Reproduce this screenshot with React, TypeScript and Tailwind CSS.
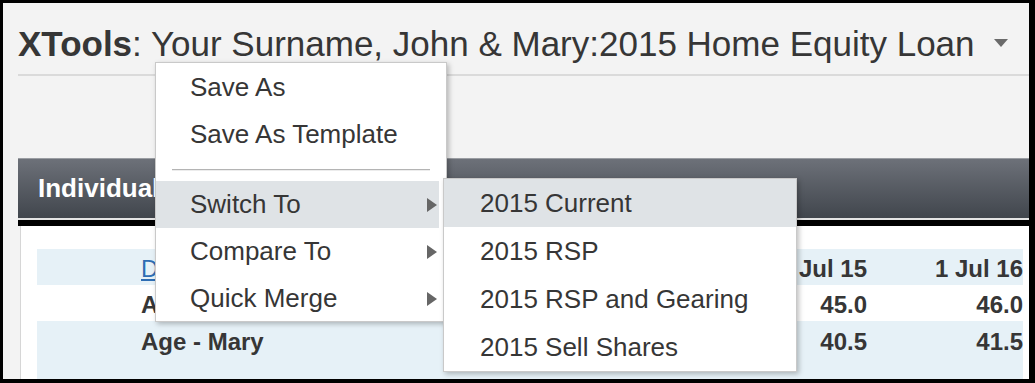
import React from 'react';

const font = { fontFamily: '"Liberation Sans", Arial, sans-serif' };

const RightArrow = () => (
    <svg width="10" height="14" viewBox="0 0 10 14" className="shrink-0">
        <path d="M0 0 L10 7 L0 14 Z" fill="#666" />
    </svg>
);

const menuItems = [
    { label: 'Switch To', active: true },
    { label: 'Compare To', active: false },
    { label: 'Quick Merge', active: false },
];

const subItems = ['2015 Current', '2015 RSP', '2015 RSP and Gearing', '2015 Sell Shares'];

const rows = [
    { label: 'Date', link: true, a: '1 Jul 15', b: '1 Jul 16', blue: true },
    { label: 'Age - John', link: false, a: '45.0', b: '46.0', blue: false },
    { label: 'Age - Mary', link: false, a: '40.5', b: '41.5', blue: true },
];

const App: React.FC = () => {
    return (
        <div style={font} className="w-[1035px] h-[383px] overflow-hidden bg-white">
            <div className="relative w-[1035px] h-[383px] flex flex-col bg-[#f3f3f3] border-l-[3px] border-t-[3px] border-r-[6px] border-b-[4px] border-black overflow-hidden text-[#363636]">
                {/* title */}
                <div className="flex items-center h-[71px] pl-[15px] pr-[21px] pt-[9px]">
                    <div className="text-[35px] leading-none whitespace-nowrap">
                        <span className="font-bold">XTools</span>: Your Surname, John &amp; Mary:2015 Home Equity Loan
                    </div>
                    <svg width="14" height="8" viewBox="0 0 14 8" className="ml-auto">
                        <path d="M0 0 L14 0 L7 8 Z" fill="#6a6a6a" />
                    </svg>
                </div>
                <div className="ml-[15px] h-[2px] bg-[#dadada]" />

                {/* panel */}
                <div className="ml-[15px] mt-[82px] flex flex-col flex-1">
                    <div className="h-[60px] flex items-center pl-[20px] border-t border-[#9a9da2] bg-gradient-to-b from-[#6d7179] to-[#41464d]">
                        <span className="text-white font-bold text-[26px] whitespace-nowrap">Individual Details</span>
                    </div>
                    <div className="h-[2px] bg-[#e4e4e4]" />
                    <div className="h-[6px] bg-black" />
                    <div className="flex-1 ml-[2px] bg-white border-l border-[#d6d6d6] pt-[23px] pl-[16px] pr-[6px] flex flex-col">
                        {rows.map((r, i) => (
                            <div
                                key={r.label}
                                className={`flex h-[36px] text-[24px] font-bold whitespace-nowrap ${r.blue ? 'bg-[#e6f1f7]' : 'bg-white'} ${i === 2 ? 'flex-1 items-start pt-[3px]' : 'items-center pt-[3px]'}`}
                            >
                                <div className="flex-1 pl-[104px]">
                                    {r.link ? <span className="text-[#2e6db3] underline font-normal">{r.label}</span> : r.label}
                                </div>
                                <div className="w-[150px] text-right">{r.a}</div>
                                <div className="w-[156px] text-right">{r.b}</div>
                            </div>
                        ))}
                    </div>
                </div>

                {/* dropdown menu */}
                <div className="absolute left-[152px] top-[59px] w-[292px] h-[260px] bg-white border border-[#c9c9c9] shadow-[2px_2px_5px_rgba(0,0,0,0.25)] pt-[1px] text-[26px] text-[#363636]">
                    <div className="h-[47px] flex items-center pl-[34px]">Save As</div>
                    <div className="h-[47px] flex items-center pl-[34px]">Save As Template</div>
                    <div className="h-[23px] flex items-center px-[16px]">
                        <div className="flex-1 h-[2px] border-t border-[#b4b4b4] bg-[#ececec]" />
                    </div>
                    {menuItems.map(m => (
                        <div
                            key={m.label}
                            className={`w-[283px] h-[47px] flex items-center pl-[34px] pr-[2px] ${m.active ? 'bg-[#dfe3e6]' : ''}`}
                        >
                            <span className="flex-1">{m.label}</span>
                            <RightArrow />
                        </div>
                    ))}
                </div>

                {/* submenu */}
                <div className="absolute left-[440px] top-[175px] w-[354px] bg-white border border-[#c9c9c9] shadow-[2px_2px_5px_rgba(0,0,0,0.25)] text-[26px] text-[#363636]">
                    {subItems.map((s, i) => (
                        <div key={s} className={`h-[48px] flex items-center pl-[36px] whitespace-nowrap ${i === 0 ? 'bg-[#dfe3e6]' : ''}`}>
                            {s}
                        </div>
                    ))}
                </div>
            </div>
        </div>
    );
};

export default App;
